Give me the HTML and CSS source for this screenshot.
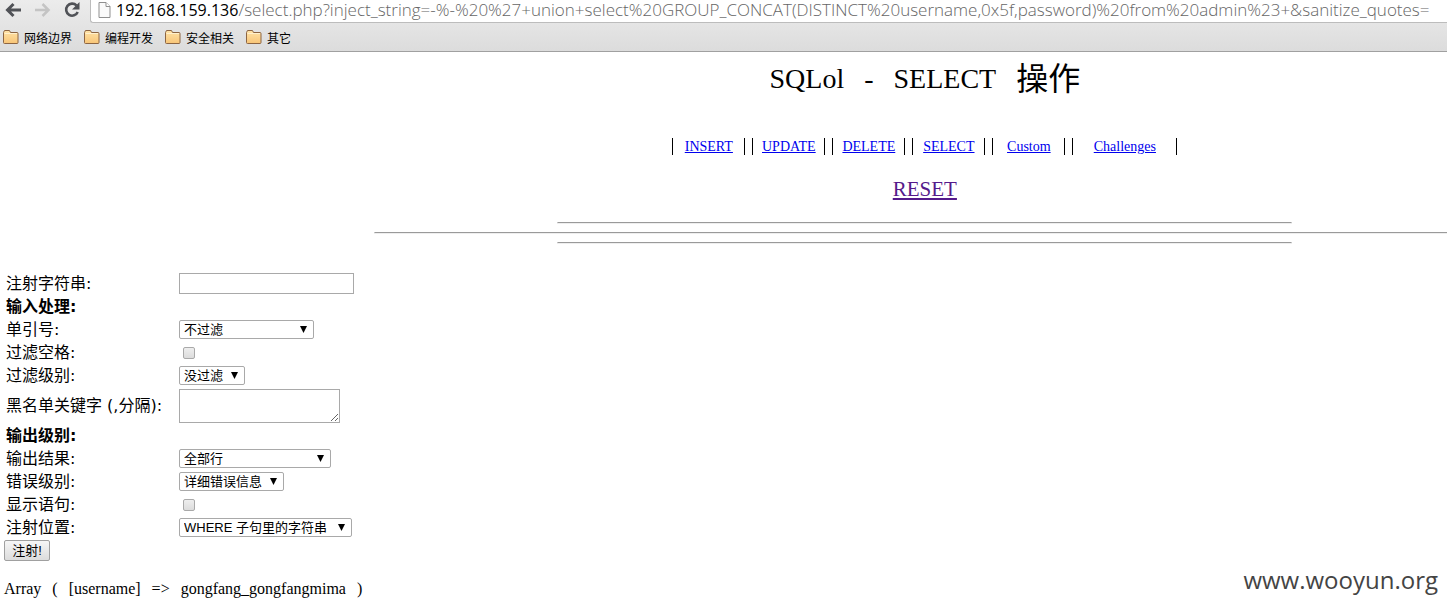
FILE: index.html
```
<!DOCTYPE html>
<html lang="zh-CN">
  <head>
    <meta charset="UTF-8" />
    <meta name="viewport" content="width=device-width, initial-scale=1.0" />
    <title>SQLol - SELECT</title>
    <link rel="stylesheet" href="styles.css">
  </head>
  <body>
    <header class="browser">
      <div class="toolbar">
        <button class="tool" aria-label="Back">
          <svg width="18" height="18" viewBox="0 0 18 18" fill="none" stroke="#505257" stroke-width="3">
            <path d="M16 9H3M8.500 3L2.500 9l6 6" />
          </svg>
        </button>
        <button class="tool" aria-label="Forward">
          <svg width="18" height="18" viewBox="0 0 18 18" fill="none" stroke="#c4c4c4" stroke-width="2.500">
            <path d="M1 9h13M8.500 3l6 6-6 6" />
          </svg>
        </button>
        <button class="tool" aria-label="Reload">
          <svg width="18" height="18" viewBox="0 0 18 18">
            <path d="M13.500 4.500A6 6 0 1 0 14.700 11" fill="none" stroke="#505257" stroke-width="2.600" />
            <path d="M16.500 1v7.500H9z" fill="#505257" />
          </svg>
        </button>
        <div class="address">
          <svg class="page-icon" width="13" height="16" viewBox="0 0 13 16">
            <path d="M1 .500h7l4 4v11H1z" fill="#fafafa" stroke="#8f8f8f" />
            <path d="M8 .500v4h4" fill="#fff" stroke="#8f8f8f" />
          </svg>
          <span class="url"><span class="host">192.168.159.136</span>/select.php?inject_string=-%-%20%27+union+select%20GROUP_CONCAT(DISTINCT%20username,0x5f,password)%20from%20admin%23+&amp;sanitize_quotes=</span>
        </div>
      </div>
      <svg class="defs" width="0" height="0">
        <defs>
          <linearGradient id="folder-fill" x1="0" y1="0" x2="0" y2="1">
            <stop offset="0" stop-color="#ffe3a8" />
            <stop offset="1" stop-color="#f8c577" />
          </linearGradient>
          <symbol id="folder" viewBox="0 0 16 14">
            <path d="M.500 12.500v-10l1-2h5l1 2h6.500q1 0 1 1v9q0 1-1 1h-12.500q-1 0-1-1z" fill="url(#folder-fill)" stroke="#8c6543" />
            <path d="M1.500 3.500h12.500" fill="none" stroke="#fff0cc" />
          </symbol>
        </defs>
      </svg>
      <nav class="bookmarks">
        <button class="bookmark"><svg width="16" height="14"><use href="#folder" /></svg>网络边界</button>
        <button class="bookmark"><svg width="16" height="14"><use href="#folder" /></svg>编程开发</button>
        <button class="bookmark"><svg width="16" height="14"><use href="#folder" /></svg>安全相关</button>
        <button class="bookmark"><svg width="16" height="14"><use href="#folder" /></svg>其它</button>
      </nav>
    </header>

    <main>
      <div class="masthead">
        <h1><span>SQLol</span> <span>-</span> <span>SELECT</span> <span class="han">操作</span></h1>
        <ul class="menu">
          <li><a href="#insert">INSERT</a></li>
          <li><a href="#update">UPDATE</a></li>
          <li><a href="#delete">DELETE</a></li>
          <li><a href="#select">SELECT</a></li>
          <li><a href="#custom">Custom</a></li>
          <li><a href="#challenges">Challenges</a></li>
        </ul>
        <a class="reset" href="#reset">RESET</a>
        <hr class="short">
        <hr class="long">
        <hr class="short">
      </div>

      <form>
        <table>
          <tr>
            <td class="name"><label for="inject">注射字符串:</label></td>
            <td><input type="text" id="inject" name="inject_string"></td>
          </tr>
          <tr>
            <th colspan="2">输入处理:</th>
          </tr>
          <tr>
            <td><label for="quotes">单引号:</label></td>
            <td>
              <select id="quotes" class="w-quotes">
                <option>不过滤</option>
              </select>
            </td>
          </tr>
          <tr>
            <td><label for="spaces">过滤空格:</label></td>
            <td><input type="checkbox" id="spaces"></td>
          </tr>
          <tr>
            <td><label for="level">过滤级别:</label></td>
            <td>
              <select id="level" class="w-level">
                <option>没过滤</option>
              </select>
            </td>
          </tr>
          <tr>
            <td><label for="keywords">黑名单关键字 (,分隔):</label></td>
            <td><textarea id="keywords"></textarea></td>
          </tr>
          <tr>
            <th colspan="2">输出级别:</th>
          </tr>
          <tr>
            <td><label for="results">输出结果:</label></td>
            <td>
              <select id="results" class="w-results">
                <option>全部行</option>
              </select>
            </td>
          </tr>
          <tr>
            <td><label for="errors">错误级别:</label></td>
            <td>
              <select id="errors" class="w-errors">
                <option>详细错误信息</option>
              </select>
            </td>
          </tr>
          <tr>
            <td><label for="show">显示语句:</label></td>
            <td><input type="checkbox" id="show"></td>
          </tr>
          <tr>
            <td><label for="location">注射位置:</label></td>
            <td>
              <select id="location" class="w-location">
                <option>WHERE 子句里的字符串</option>
              </select>
            </td>
          </tr>
        </table>
        <button class="submit" type="button">注射!</button>
      </form>

      <p class="output"><span>Array</span> <span>(</span> <span>[username]</span> <span>=&gt;</span> <span>gongfang_gongfangmima</span> <span>)</span></p>
    </main>

    <div class="watermark">www.wooyun.org</div>
  </body>
</html>
```

FILE: styles.css
```
* {
  box-sizing: border-box;
}
body {
  margin: 0;
  min-height: 100vh;
  position: relative;
  overflow-x: hidden;
  background: #fff;
  color: #000;
  font-family: "Liberation Serif", "Noto Sans CJK SC", serif;
  font-size: 16px;
}

/* browser bars */
.browser {
  background: linear-gradient(#ececec, #dcdcdc);
  border-bottom: 1px solid #a0a0a0;
  overflow: hidden;
}
.toolbar {
  display: flex;
  height: 23px;
}
.tool {
  width: 29px;
  height: 19px;
  padding: 0 0 0 5px;
  border: none;
  background: none;
  flex: none;
}
.tool svg {
  display: block;
}
.address {
  display: flex;
  flex: 1;
  gap: 5px;
  min-width: 0;
  margin-left: 3px;
  padding-left: 7px;
  background: #fff;
  border: 1px solid #bcbcbc;
  border-width: 0 0 1px 1px;
  border-radius: 0 0 0 3px;
  overflow: hidden;
}
.page-icon {
  flex: none;
  margin-top: 2px;
}
.url {
  color: #666;
  font-family: "Open Sans", sans-serif;
  font-size: 17px;
  font-weight: 300;
  line-height: 20px;
  white-space: nowrap;
}
.host {
  color: #000;
  font-size: 16px;
  font-weight: normal;
}
.defs {
  display: block;
}
.bookmarks {
  display: flex;
  gap: 12px;
  height: 28px;
  padding-left: 3px;
}
.bookmark {
  display: flex;
  align-items: center;
  gap: 5px;
  padding: 0;
  border: none;
  background: none;
  color: #000;
  font-family: "Noto Sans CJK SC", sans-serif;
  font-size: 12px;
}

/* title and menu */
.masthead {
  display: flex;
  flex-direction: column;
  align-items: center;
  width: 127vw;
  margin-left: 6px;
  padding-top: 8px;
}
h1 {
  display: flex;
  align-items: center;
  gap: 20px;
  height: 38px;
  margin: 0;
  font-size: 28px;
  font-weight: normal;
}
.han {
  font-size: 32px;
  line-height: 38px;
}
.menu {
  display: grid;
  grid-template-columns: repeat(5, 73px) 105px;
  gap: 7px;
  margin: 40px 0 0;
  padding: 0;
  list-style: none;
  font-size: 14px;
  line-height: 17px;
  text-align: center;
}
.menu li {
  border: 1px solid #000;
  border-width: 0 1px;
}
.menu a {
  color: #0000ee;
}
.reset {
  margin: 21px 0 20px;
  color: #551a8b;
  font-size: 21px;
  line-height: 26px;
}
hr {
  width: 40%;
  margin: 0 0 8px;
  border: 1px solid #eee;
  border-top-color: #9a9a9a;
}
hr.long {
  width: 60%;
}

/* form */
form {
  margin: 19px 0 0 4px;
}
table {
  border-spacing: 2px;
  font-family: "DejaVu Sans", "Noto Sans CJK SC", sans-serif;
  line-height: 20px;
}
tr {
  height: 21px;
}
td,
th {
  padding: 0 1px 0 0;
  text-align: left;
  white-space: nowrap;
}
.name {
  width: 171px;
}
input,
select,
textarea {
  display: block;
  margin: 0;
  border: 1px solid #a9a9a9;
  background-color: #fff;
}
input[type="text"] {
  width: 175px;
  height: 21px;
}
input[type="checkbox"] {
  appearance: none;
  width: 12px;
  height: 12px;
  margin-left: 4px;
  border-radius: 2px;
  background: linear-gradient(#eee, #dcdcdc);
}
select {
  appearance: none;
  height: 19px;
  padding: 0 4px;
  border-radius: 2px;
  background: url("data:image/svg+xml,%3Csvg xmlns='http://www.w3.org/2000/svg' width='7' height='7'%3E%3Cpath d='M0 0h7L3.500 7z'/%3E%3C/svg%3E") no-repeat right 6px center;
  color: #000;
  font-family: "Liberation Sans", "Noto Sans CJK SC", sans-serif;
  font-size: 13px;
  line-height: 17px;
}
.w-quotes {
  width: 135px;
}
.w-level {
  width: 66px;
}
.w-results {
  width: 152px;
}
.w-errors {
  width: 105px;
}
.w-location {
  width: 173px;
}
textarea {
  width: 161px;
  height: 34px;
  margin: 1px 0 0;
}
.submit {
  display: block;
  width: 46px;
  height: 21px;
  padding: 0;
  border: 1px solid #a0a0a0;
  border-radius: 2px;
  background: linear-gradient(#f6f6f6, #dcdcdc);
  color: #000;
  font-family: "Liberation Sans", "Noto Sans CJK SC", sans-serif;
  font-size: 13px;
  line-height: 17px;
}
.output {
  display: flex;
  gap: 11px;
  margin: 18px 0 0 4px;
  font-size: 16px;
  line-height: 20px;
}

.watermark {
  position: absolute;
  right: 9px;
  bottom: 13px;
  color: #444;
  font-family: "Open Sans", sans-serif;
  font-size: 24px;
  line-height: 34px;
}
```
